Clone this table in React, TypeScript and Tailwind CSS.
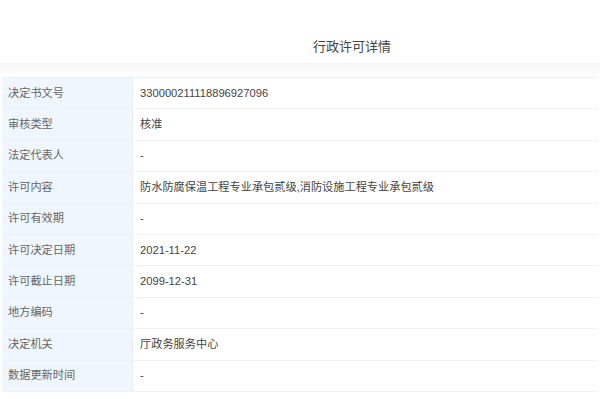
const rows: [string, string][] = [
  ["决定书文号", "33000021111 8896927096".replace(" ", "")],
  ["审核类型", "核准"],
  ["法定代表人", "-"],
  ["许可内容", "防水防腐保温工程专业承包贰级,消防设施工程专业承包贰级"],
  ["许可有效期", "-"],
  ["许可决定日期", "2021-11-22"],
  ["许可截止日期", "2099-12-31"],
  ["地方编码", "-"],
  ["决定机关", "厅政务服务中心"],
  ["数据更新时间", "-"],
];

export default function App() {
  return (
    <div
      className="w-[600px] h-[399px] overflow-hidden bg-white"
      style={{ fontFamily: '"Liberation Sans", Arial, "Noto Sans CJK SC", sans-serif' }}
    >
      <div className="h-[63px] flex items-center pl-[313px] pt-[30px]">
        <span className="text-[13px] leading-none text-[#444]">行政许可详情</span>
      </div>
      <div className="h-[14px] bg-gradient-to-b from-[#f5f5f5] to-white" />
      <div className="mx-[2px] border-t border-[#eef1f4]">
        {rows.map(([label, value]) => (
          <div key={label} className="flex h-[31.4px] border-b border-[#eef2f6] text-[11.2px] leading-none">
            <div className="w-[131px] shrink-0 flex items-center pl-[6px] bg-[#eff6fd] border-r border-[#e8eef5] text-[#666]">
              {label}
            </div>
            <div className="flex-1 flex items-center pl-[7px] text-[#444]">{value}</div>
          </div>
        ))}
      </div>
    </div>
  );
}
